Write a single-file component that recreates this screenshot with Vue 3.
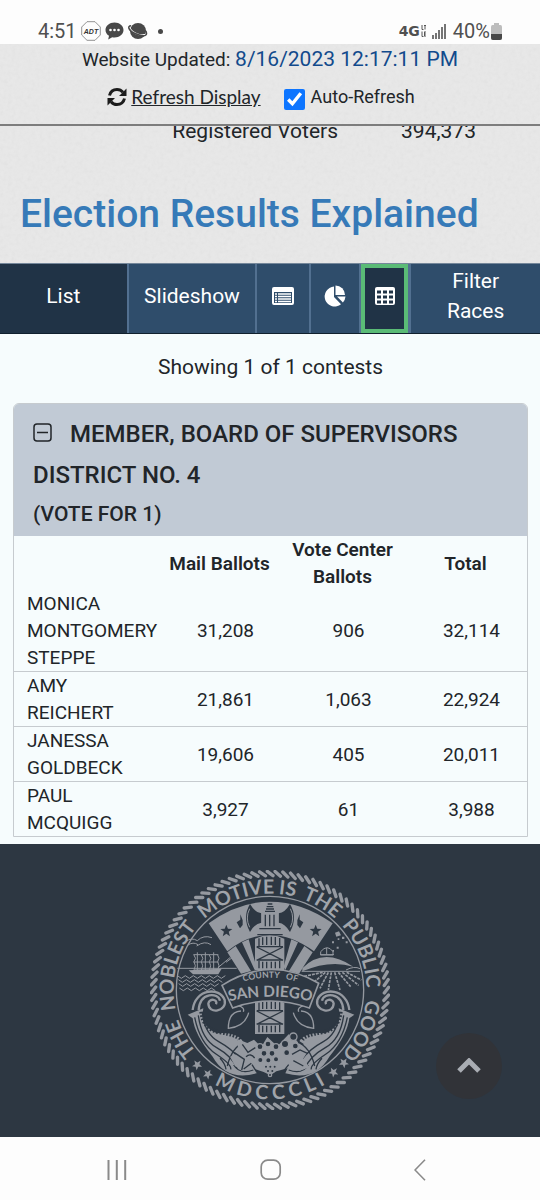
<template>
  <div class="screen">
    <div class="status-bar">
      <div class="status-left">
        <span>4:51</span>
        <svg class="adt" width="20" height="20" viewBox="0 0 20 20">
          <path d="M6 .7h8L19.300 6v8L14 19.300H6L.7 14V6z" fill="none" stroke="#777" stroke-width=".8" />
          <text x="10" y="12.500" text-anchor="middle">ADT</text>
        </svg>
        <svg width="19" height="18" viewBox="0 0 19 18">
          <path d="M9.500.5C4.500.5.500 3.800.500 8c0 2.500 1.300 4.500 3.500 5.800l-.8 3.700 4-2.200c.7.2 1.500.2 2.300.2 5 0 9-3.300 9-7.500s-4-7.500-9-7.500z" fill="#484848" />
          <circle cx="5.500" cy="8" r="1.300" fill="#fff" />
          <circle cx="9.500" cy="8" r="1.300" fill="#fff" />
          <circle cx="13.500" cy="8" r="1.300" fill="#fff" />
        </svg>
        <svg width="20" height="18" viewBox="0 0 20 18">
          <circle cx="10" cy="9" r="8" fill="#484848" />
          <path d="M1.500 5.500C3 10 11 14.500 18.500 12.500" fill="none" stroke="#fff" stroke-width="1.600" />
          <path d="M3 3.800C-1 4 .5 8.500 7 11.500s12 3 11.500-.5c0-1-.6-2-1.500-2.800" fill="none" stroke="#484848" stroke-width="1.500" />
        </svg>
        <i class="dot"></i>
      </div>
      <div class="status-right">
        <b class="net">4G</b>
        <svg width="5" height="12" viewBox="0 0 5 12">
          <path d="M1 0v4.500h1.500M3 .5h2M4 .5v4M1 6.500v5h1.500M3 7h2M3 9h2M3 11h2M3.500 7v4" fill="none" stroke="#555" />
        </svg>
        <svg class="signal" width="15" height="15" viewBox="0 0 15 15">
          <path d="M1 11v4M4 9v6M7 6v9M10 3v12M13 0v15" stroke="#484848" stroke-width="1.500" />
        </svg>
        <span>40%</span>
        <svg width="11" height="17" viewBox="0 0 11 17">
          <path d="M3 0h5v2h1.500Q11 2 11 4v11q0 2-2 2H2q-2 0-2-2V4q0-2 1.500-2H3z" fill="#bdbdbd" />
          <path d="M0 11h11v4q0 2-2 2H2q-2 0-2-2z" fill="#484848" />
        </svg>
      </div>
    </div>

    <header class="masthead paper">
      <p class="updated">Website Updated: <span>8/16/2023 12:17:11 PM</span></p>
      <div class="refresh-row">
        <a class="refresh" href="#">
          <svg width="20" height="20" viewBox="0 0 20 20">
            <path d="M2.500 8.500C3.500 4.500 6.500 2.500 10 2.500c2.500 0 4.500 1 6 2.800M17.500 11.500c-1 4-4 6-7.500 6-2.500 0-4.500-1-6-2.800" fill="none" stroke="#1c1c1c" stroke-width="3" />
            <path d="M19.500 1.500V9H12zM.5 18.500V11H8z" fill="#1c1c1c" />
          </svg>
          <span>Refresh Display</span>
        </a>
        <input id="auto" v-model="autoRefresh" type="checkbox" />
        <label for="auto">Auto-Refresh</label>
      </div>
    </header>

    <section class="summary paper">
      <div class="clip">
        <div class="voters">
          <span>Registered Voters</span>
          <span>394,373</span>
        </div>
      </div>
      <h1><a href="#">Election Results Explained</a></h1>
    </section>

    <nav class="toolbar">
      <button class="selected" type="button">List</button>
      <button type="button">Slideshow</button>
      <button type="button" aria-label="Detail view">
        <svg width="22" height="18" viewBox="0 0 22 18">
          <path fill-rule="evenodd" d="M2 0h18q2 0 2 2v14q0 2-2 2H2q-2 0-2-2V2q0-2 2-2zM2 5v11h18V5z" fill="#fff" />
          <path d="M3 7h2M6 7h13M3 9.500h2M6 9.500h13M3 12h2M6 12h13M3 14.500h2M6 14.500h13" stroke="#fff" stroke-width="1.400" />
        </svg>
      </button>
      <button type="button" aria-label="Chart view">
        <svg width="22" height="22" viewBox="0 0 22 22">
          <path d="M10 1.500V12l7 7.200A10 10 0 1 1 10 1.500z" fill="#fff" />
          <path d="M11.500.5a9.500 9.500 0 0 1 9.500 9.500h-9.500z" fill="#fff" />
          <path d="M13 11.500h8.500q-.3 3.500-2.600 6z" fill="#fff" />
        </svg>
      </button>
      <button class="selected focused" type="button" aria-label="Table view">
        <svg width="20" height="18" viewBox="0 0 20 18">
          <rect width="20" height="18" rx="2" fill="#fff" />
          <path d="M2 3.500h4v3H2zM8 3.500h4v3H8zM14 3.500h4v3h-4zM2 8.500h4v3H2zM8 8.500h4v3H8zM14 8.500h4v3h-4zM2 13.500h4v3H2zM8 13.500h4v3H8zM14 13.500h4v3h-4z" fill="#203346" />
        </svg>
      </button>
      <button type="button">Filter<br />Races</button>
    </nav>

    <main class="content">
      <p class="showing">Showing 1 of 1 contests</p>
      <article class="contest">
        <div class="contest-head">
          <h2>
            <button class="toggle" type="button" aria-label="Collapse contest">
              <svg width="19" height="19" viewBox="0 0 19 19">
                <rect x="1" y="1" width="17" height="17" rx="3" fill="none" stroke="#212529" stroke-width="1.500" />
                <path d="M4 9.500h11" stroke="#212529" stroke-width="1.500" />
              </svg>
            </button>MEMBER, BOARD OF SUPERVISORS DISTRICT NO. 4
          </h2>
          <h3>(VOTE FOR 1)</h3>
        </div>
        <table>
          <thead>
            <tr>
              <th class="name"></th>
              <th>Mail Ballots</th>
              <th>Vote Center Ballots</th>
              <th>Total</th>
            </tr>
          </thead>
          <tbody>
            <tr v-for="c in candidates" :key="c.name">
              <td class="name">{{ c.name }}</td>
              <td>{{ c.mail }}</td>
              <td>{{ c.center }}</td>
              <td>{{ c.total }}</td>
            </tr>
          </tbody>
        </table>
      </article>
    </main>

    <footer class="footer">
      <svg class="seal" viewBox="30 30 720 720" role="img" aria-label="County of San Diego seal">
        <defs>
          <path id="ring" d="M390 679A289 289 0 0 1 390 101A289 289 0 0 1 390 679" />
          <path id="ring-low" d="M62 390A328 328 0 0 0 718 390" />
          <path id="banner-top" d="M280 376Q390 330 502 376" />
          <path id="banner-low" d="M268 424Q390 396 514 424" />
        </defs>

        <path class="rope" :d="rope" />
        <circle class="line" cx="390" cy="390" r="281" />
        <text v-for="w in motto" :key="w.at" class="motto">
          <textPath href="#ring" :startOffset="w.at + '%'">{{ w.text }}</textPath>
        </text>
        <text class="motto">
          <textPath href="#ring-low" startOffset="50%">M D C C C L I</textPath>
        </text>
        <path v-for="s in ringStars" :key="s" class="fill" :d="star" :transform="s" />

        <!-- flag fan -->
        <path class="fill" d="M206 190Q294 125 390 125Q486 125 578 190L522 274Q455 225 390 225Q322 225 262 274z" />
        <path class="fill" d="M262 277L287 258L333 333L303 341zM306 247L326 238L349 320L344 330zM518 277L493 258L447 333L477 341zM474 247L454 238L431 320L436 330z" />
        <path class="dark" :d="star" transform="translate(259 212) scale(1.200)" />
        <path class="dark" :d="star" transform="translate(527 212) scale(1.200)" />
        <path class="dark" d="M364 160Q345 158 330 132Q306 172 330 216Q345 190 364 188zM290 187l11-8 0-16 7 18 0 14-8 10zM416 160Q435 158 450 132Q474 172 450 216Q435 190 416 188zM490 187l-11-8 0-16-7 18 0 14 8 10z" />
        <path class="line thin" d="M329 146Q315 174 329 202M451 146Q465 174 451 202" />
        <path class="fill" d="M364 158h52v48h-52zM358 207h64v14h-64z" />
        <path class="dark-line" d="M376 164v35M389 164v35M402 164v35M358 206h64M352 224h76M383 132h14M380 140h20M378 147h24M375 154h30" />

        <!-- fasces -->
        <g v-for="y in [228, 420]" :key="y" :transform="'translate(0 ' + y + ')'">
          <path class="fill" d="M345 8Q390-12 433 8V102H345z" />
          <path class="dark-line" d="M357 7v24M368 4v23M380 2v25M394 2v25M406 3v24M419 6v25M357 75v22M368 77v20M380 77v20M394 77v20M406 77v20M419 75v22M350 32h79M350 72h79M350 33l79 40M350 73l79-40" />
        </g>

        <!-- ship and sea -->
        <path class="line thin" d="M112 325H290M137 245q18-14 35-3 18-18 44-9M142 256q18-12 32-2M170 258q24-17 43-4M160 284h75M160 306h75M163 330h70M172 277v55M196 277v55M221 277v55M162 285q9 10 0 20 8 12 0 25M184 285q9 10 0 20 8 12 0 25M208 285q9 10 0 20 8 12 0 25M233 285q8 10 0 20 8 12 0 25M235 322l36-30M258 307l20-15 28 28" />
        <path class="fill" d="M146 331L245 326L235 343H159z" />
        <path class="line thin" d="M112 347l12 8 12-8 12 8 12-8 12 8 12-8 12 8 12-8 12 8 12-8 12 8 12-8M115 359l12 8 12-8 12 8 12-8 12 8 12-8 12 8 12-8 12 8 12-8 12 8M116 371l12 8 12-8 12 8 12-8 12 8 12-8 12 8 12-8 12 8 12-8M118 384l12 8 12-8 12 8 12-8 12 8 12-8 12 8 12-8 12 8" />

        <!-- hills and observatory -->
        <path class="fill" d="M487 325Q550 260 640 320Q570 298 487 334z" />
        <path class="line thin" d="M542 285v-10q20-24 37 0v10zM540 284h42M560 264v20M485 334h175M618 330q25-13 42-4" />
        <path class="rows" d="M548 337L488 350M556 337L512 375M565 337L540 385M574 337L565 390M584 337L600 390M595 337L632 380M607 337L656 376M620 337L664 360" />
        <path class="fill" d="M585 218l12-4 6 12-14 4zM606 230h7v7h-7zM617 244h6v6h-6zM576 244h6v6h-6zM590 260h6v6h-6zM577 270h5v5h-5zM593 235h5v5h-5z" />

        <!-- cornucopias, mirrored around the fasces -->
        <g v-for="t in ['', 'translate(786 0) scale(-1 1)']" :key="t" :transform="t">
          <path class="line wide" d="M158 450C165 385 240 380 254 420C262 455 205 465 205 430C208 413 235 418 228 433M176 450C180 395 235 397 240 422" />
          <path class="fill" d="M143 464L190 445Q180 500 230 520Q285 515 306 540L350 640Q260 665 218 590Q164 525 158 475z" />
          <path class="dark-line" d="M164 472Q180 550 228 582T272 628M175 466Q184 537 230 563T292 626M187 458Q194 522 236 545T300 598M240 595Q255 610 258 628" />
          <path class="beads" d="M184 455Q190 510 240 517T300 540" />
          <path class="line" d="M303 453Q265 455 265 505Q315 500 326 458M310 455q5-12-15-18" />
          <path class="dark-line" d="M262 618Q276 560 316 545M281 615Q300 645 340 630M302 575q22-30 32 0-10 20-20 4" />
        </g>

        <path class="fill" d="M292 537l30 12 20-10 22 22 18-30 30 28 34-36 24 15 12 30 22 5-15 24 20 25-30 10-25-10-45 12-18 12-20-10-30-10-32 8-24-16-15-28 25-10z" />
        <circle v-for="g in grapes" :key="g.x + '-' + g.y" class="grape" :cx="g.x" :cy="g.y" :r="g.r" />
        <path class="dark-line" d="M283 578l30 20-8 32M307 553l17 24 22-14M456 583l24-13 24 11M460 602l30 16M334 610l-23 17M318 590q14-12 26 4M470 540l20 14M350 636l-14-22M430 634l16-20" />

        <!-- name banner -->
        <path class="banner" d="M246 376Q390 284 536 370L508 444Q390 402 278 444z" />
        <text class="county"><textPath href="#banner-top" startOffset="50%">COUNTY &#160; OF</textPath></text>
        <text class="diego"><textPath href="#banner-low" startOffset="50%">SAN DIEGO</textPath></text>
      </svg>
      <button class="to-top" type="button" aria-label="Back to top">
        <svg width="24" height="16" viewBox="0 0 24 16">
          <path d="M2 13L12 3L22 13" fill="none" stroke="#a9adb3" stroke-width="5" />
        </svg>
      </button>
    </footer>

    <nav class="system-nav">
      <button type="button" aria-label="Recent apps">
        <svg width="20" height="20" viewBox="0 0 20 20">
          <path d="M1.500 0v20M9.800 0v20M18.200 0v20" stroke="#8a8a8a" stroke-width="2" />
        </svg>
      </button>
      <button type="button" aria-label="Home">
        <svg width="22" height="22" viewBox="0 0 22 22">
          <rect x="1.200" y="1.200" width="19" height="19" rx="6.500" fill="none" stroke="#8a8a8a" stroke-width="1.700" />
        </svg>
      </button>
      <button type="button" aria-label="Back">
        <svg width="12" height="22" viewBox="0 0 12 22">
          <path d="M11 .8L1 11l10 10.200" fill="none" stroke="#8a8a8a" stroke-width="1.600" />
        </svg>
      </button>
    </nav>
  </div>
</template>

<script setup>
import { ref } from 'vue'

const autoRefresh = ref(true)

const candidates = [
  { name: 'MONICA MONTGOMERY STEPPE', mail: '31,208', center: '906', total: '32,114' },
  { name: 'AMY REICHERT', mail: '21,861', center: '1,063', total: '22,924' },
  { name: 'JANESSA GOLDBECK', mail: '19,606', center: '405', total: '20,011' },
  { name: 'PAUL MCQUIGG', mail: '3,927', center: '61', total: '3,988' }
]

// position of each word along the ring, in percent clockwise from the bottom
const motto = [
  { text: 'THE', at: 17 },
  { text: 'NOBLEST', at: 29 },
  { text: 'MOTIVE', at: 44.4 },
  { text: 'IS', at: 52.8 },
  { text: 'THE', at: 58.6 },
  { text: 'PUBLIC', at: 69 },
  { text: 'GOOD', at: 81.6 }
]

const star = 'M0-15L4-5L15-4L6 3L9 14L0 8L-9 14L-6 3L-15-4L-4-5z'

const ringStars = [
  'translate(172 614) rotate(40)',
  'translate(204 642) rotate(30)',
  'translate(580 636) rotate(-30)',
  'translate(611 608) rotate(-40)'
]

// slanted strands of the rope border
const strands = 96
const point = (r, deg) => {
  const a = (deg * Math.PI) / 180
  return (390 + r * Math.sin(a)).toFixed(1) + ' ' + (390 - r * Math.cos(a)).toFixed(1)
}
const rope = Array.from({ length: strands }, (_, i) => {
  const a = (i * 360) / strands
  return `M${point(343, a + 1.5)}L${point(356, a - 1.3)}`
}).join('')

const grapes = [
  { x: 360, y: 560, r: 9 }, { x: 384, y: 552, r: 9 }, { x: 408, y: 560, r: 9 },
  { x: 372, y: 580, r: 9 }, { x: 396, y: 580, r: 9 }, { x: 361, y: 600, r: 8 },
  { x: 385, y: 601, r: 8 }, { x: 408, y: 598, r: 8 }, { x: 435, y: 552, r: 11 },
  { x: 460, y: 530, r: 11 }, { x: 440, y: 578, r: 9 }, { x: 466, y: 558, r: 9 },
  { x: 378, y: 620, r: 5 }, { x: 391, y: 620, r: 5 }, { x: 404, y: 620, r: 5 },
  { x: 384, y: 633, r: 5 }, { x: 397, y: 633, r: 5 }, { x: 390, y: 645, r: 5 }
]
</script>

<style>
body {
  margin: 0;
  background: #fdfdfd;
}
</style>

<style scoped>
.screen {
  display: flex;
  flex-direction: column;
  min-height: 100vh;
  font-family: Roboto, "Liberation Sans", sans-serif;
  color: #212529;
}

p, h1, h2, h3 {
  margin: 0;
  font-weight: 500;
}

svg {
  display: block;
}

button {
  border: 0;
  padding: 0;
  margin: 0;
  background: none;
  font: inherit;
  color: inherit;
}

/* phone status bar */
.status-bar {
  display: flex;
  justify-content: space-between;
  align-items: flex-end;
  height: 44px;
  padding: 0 38px 2px;
  box-sizing: border-box;
  font-size: 20px;
  line-height: 22px;
  color: #505050;
}

.status-left,
.status-right {
  display: flex;
  align-items: center;
}

.status-left {
  gap: 4px;
}

.dot {
  width: 5px;
  height: 5px;
  margin-left: 6px;
  border-radius: 50%;
  background: #484848;
}

.adt text {
  font: italic bold 7px "Liberation Sans", sans-serif;
  fill: #333;
}

.status-right {
  gap: 1px;
}

.net {
  font: bold 14px/22px "DejaVu Sans", sans-serif;
}

.signal {
  margin: 0 5px;
}

/* grey paper header */
.paper {
  background-color: #e8e8e8;
  background-image: url("data:image/svg+xml,%3Csvg xmlns='http://www.w3.org/2000/svg' width='240' height='240'%3E%3Cfilter id='n'%3E%3CfeTurbulence type='fractalNoise' baseFrequency='.25' numOctaves='2' stitchTiles='stitch'/%3E%3CfeColorMatrix type='saturate' values='0'/%3E%3C/filter%3E%3Crect width='240' height='240' filter='url(%23n)' opacity='.08'/%3E%3C/svg%3E");
}

.masthead {
  padding-bottom: 13px;
  border-bottom: 2px solid #7d7d7d;
}

.updated {
  text-align: center;
  font-size: 19px;
  font-weight: 400;
  line-height: 30px;
}

.updated span {
  font-size: 21px;
  color: #124a8c;
}

.refresh-row {
  display: flex;
  justify-content: center;
  align-items: center;
  margin-top: 8px;
  padding-right: 18px;
  font-size: 18px;
  line-height: 28px;
}

.refresh {
  display: flex;
  align-items: center;
  gap: 4px;
  color: #212529;
  text-decoration: none;
}

.refresh span {
  font-family: Lato, sans-serif;
  font-size: 19px;
  text-decoration: underline;
}

.refresh-row input {
  width: 21px;
  height: 21px;
  margin: 4px 6px 0 23px;
  accent-color: #0d75ff;
}

.clip {
  overflow: hidden;
}

.voters {
  display: flex;
  justify-content: flex-end;
  gap: 63px;
  margin-top: -9px;
  padding-right: 64px;
  font-size: 21px;
  line-height: 28px;
}

h1 {
  padding: 44px 20px 24px;
  font-size: 39px;
  line-height: 50px;
}

h1 a {
  color: #367ab8;
  text-decoration: none;
}

/* view switcher */
.toolbar {
  display: grid;
  grid-template-columns: 1fr 1fr 54px 50px 50px 1fr;
  height: 71px;
  box-sizing: border-box;
  border-top: 1px solid #75879a;
  border-bottom: 1px solid #10202e;
  background: #2f4d6b;
  color: #fff;
  font-size: 21px;
  line-height: 30px;
}

.toolbar button {
  display: flex;
  justify-content: center;
  align-items: center;
  padding-bottom: 5px;
  border-right: 2px solid #527090;
}

.toolbar button:last-child {
  border-right: 0;
}

.toolbar .selected {
  background: #203346;
}

.toolbar .focused {
  border-right-width: 3px;
  box-shadow: inset 0 0 0 4px #5abb76;
}

/* results */
.content {
  padding: 0 12px 7px 13px;
  background: #f6fcfd;
}

.showing {
  padding: 18px 0 21px;
  text-align: center;
  font-size: 21px;
  font-weight: 400;
  line-height: 30px;
}

.contest {
  border: 1px solid #c6cbcf;
  border-radius: 6px 6px 0 0;
  overflow: hidden;
}

.contest-head {
  padding: 10px 20px 4px 19px;
  background: #c1cad5;
}

h2 {
  font-size: 24px;
  line-height: 41px;
}

h3 {
  font-size: 21px;
  line-height: 36px;
}

.toggle {
  display: inline-block;
  margin-right: 18px;
}

table {
  width: 100%;
  table-layout: fixed;
  border-collapse: collapse;
  font-size: 19px;
  line-height: 27px;
}

th {
  padding: 0;
  font-weight: 600;
}

td {
  padding: 0 0 0 12px;
  text-align: center;
}

th.name,
td.name {
  width: 131px;
  padding-left: 13px;
  text-align: left;
}

tbody tr + tr td {
  border-top: 1px solid #c6cbcf;
}

/* footer */
.footer {
  position: relative;
  display: flex;
  justify-content: center;
  padding: 26px 0 27px;
  background: #2d3742;
}

.seal {
  width: 240px;
  height: 240px;
}

.fill {
  fill: #9599a0;
}

.dark {
  fill: #2d3742;
}

.line,
.rope,
.rows,
.beads {
  fill: none;
  stroke: #9599a0;
  stroke-width: 4px;
}

.line.thin {
  stroke-width: 3px;
}

.line.wide {
  stroke-width: 7px;
}

.rope {
  stroke-width: 10px;
  stroke-linecap: round;
}

.rows {
  stroke-width: 5px;
  stroke-dasharray: 9 3;
}

.beads {
  stroke: #2d3742;
  stroke-width: 12px;
  stroke-dasharray: 5 5;
}

.dark-line {
  fill: none;
  stroke: #2d3742;
  stroke-width: 4px;
}

.grape {
  fill: #2d3742;
  stroke: #9599a0;
  stroke-width: 4px;
}

.banner {
  fill: #2d3742;
  stroke: #9599a0;
  stroke-width: 5px;
}

.motto,
.county,
.diego {
  font-family: Lato, sans-serif;
  font-weight: 700;
  text-anchor: middle;
  fill: #a0a4aa;
}

.motto {
  font-size: 59px;
}

.county {
  font-size: 26px;
}

.diego {
  font-size: 46px;
}

.to-top {
  position: absolute;
  right: 38px;
  bottom: 38px;
  display: flex;
  justify-content: center;
  align-items: center;
  width: 66px;
  height: 66px;
  border-radius: 50%;
  background: #313338;
}

.system-nav {
  display: flex;
  justify-content: space-between;
  align-items: center;
  height: 63px;
  padding: 2px 114px 0 107px;
  box-sizing: border-box;
  background: #fdfdfd;
}
</style>
